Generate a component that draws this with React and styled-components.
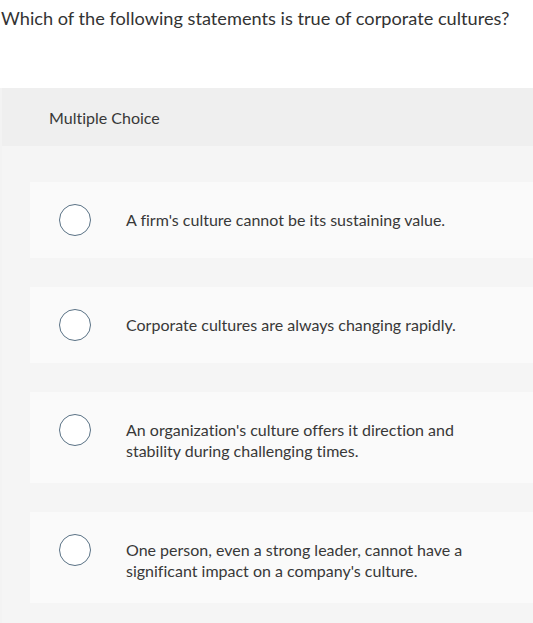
import React from 'react';
import styled, { createGlobalStyle } from 'styled-components';

const Global = createGlobalStyle`
  html, body {
    margin: 0;
    padding: 0;
    background: #ffffff;
    overflow: hidden;
  }
  body {
    font-family: Lato, "Open Sans", Arial, sans-serif;
    font-variant-ligatures: none;
    color: #333333;
  }
`;

const Page = styled.div`
  width: 533px;
  height: 623px;
  display: flex;
  flex-direction: column;
`;

const Question = styled.div`
  font-size: 18.2px;
  line-height: 22px;
  padding: 7px 0 0 1px;
  height: 88px;
  flex: none;
  color: #333333;
  box-sizing: border-box;
`;

const Panel = styled.div`
  flex: 1;
  background: #f5f5f5;
  border-left: 2px solid #f3f3f3;
`;

const PanelHeader = styled.div`
  height: 58px;
  background: #efefef;
  display: flex;
  align-items: center;
  padding-left: 47px;
  font-size: 16px;
  color: #383838;
`;

const Choices = styled.div`
  display: flex;
  flex-direction: column;
  gap: 29px;
  padding: 36px 0 0 28px;
`;

const Card = styled.div`
  display: flex;
  align-items: flex-start;
  background: #fafafa;
  padding: 22px 20px 22px 29px;
  min-height: 76px;
  box-sizing: border-box;
`;

const Radio = styled.div`
  width: 32px;
  height: 32px;
  flex: none;
  box-sizing: border-box;
  border-radius: 50%;
  border: 1.5px solid #5a7285;
  background: #ffffff;
`;

const Label = styled.div`
  margin-left: 35px;
  padding-top: 5px;
  font-size: 16px;
  line-height: 21px;
  color: #383838;
  max-width: 360px;
`;

const choices = [
  "A firm's culture cannot be its sustaining value.",
  'Corporate cultures are always changing rapidly.',
  "An organization's culture offers it direction and stability during challenging times.",
  "One person, even a strong leader, cannot have a significant impact on a company's culture.",
];

export default function App() {
  return (
    <Page>
      <Global />
      <Question>Which of the following statements is true of corporate cultures?</Question>
      <Panel>
        <PanelHeader>Multiple Choice</PanelHeader>
        <Choices>
          {choices.map((c) => (
            <Card key={c}>
              <Radio />
              <Label>{c}</Label>
            </Card>
          ))}
        </Choices>
      </Panel>
    </Page>
  );
}
